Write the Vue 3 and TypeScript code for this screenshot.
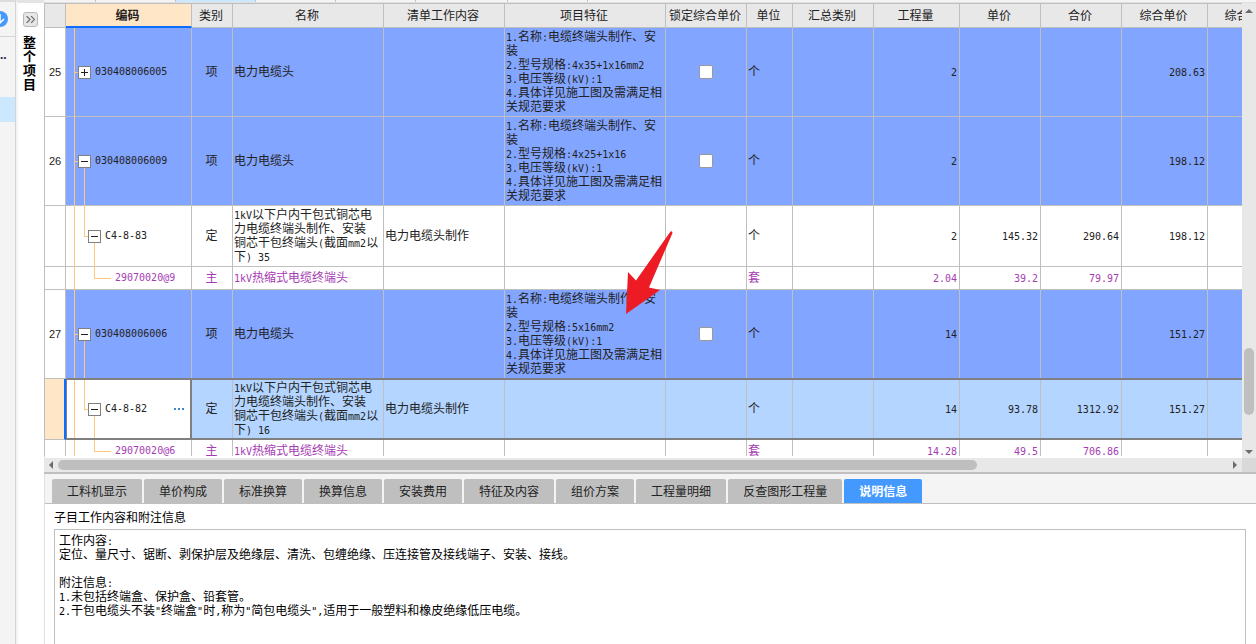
<script setup lang="ts">
import { ref } from 'vue'

interface Column { key: string; title: string; width: number; align: 'left' | 'center' | 'right' }
interface Row {
  no: string
  level: 1 | 2 | 3
  open: boolean
  code: string
  kind: string
  name: string[]
  work?: string
  feature?: string[]
  unit: string
  qty: string
  price?: string
  total?: string
  comp?: string
  tone: 'item' | 'plain' | 'material' | 'selected'
}

const columns: Column[] = [
  { key: 'code', title: '编码', width: 126, align: 'left' },
  { key: 'kind', title: '类别', width: 41, align: 'center' },
  { key: 'name', title: '名称', width: 151, align: 'left' },
  { key: 'work', title: '清单工作内容', width: 121, align: 'left' },
  { key: 'feature', title: '项目特征', width: 161, align: 'left' },
  { key: 'lock', title: '锁定综合单价', width: 81, align: 'center' },
  { key: 'unit', title: '单位', width: 46, align: 'left' },
  { key: 'sum', title: '汇总类别', width: 81, align: 'left' },
  { key: 'qty', title: '工程量', width: 86, align: 'right' },
  { key: 'price', title: '单价', width: 81, align: 'right' },
  { key: 'total', title: '合价', width: 81, align: 'right' },
  { key: 'comp', title: '综合单价', width: 86, align: 'right' },
  { key: 'compTotal', title: '综合合价', width: 84, align: 'right' },
]

const feature = (spec: string[]): string[] => [
  '1.名称:电缆终端头制作、安', '装', ...spec, '4.具体详见施工图及需满足相', '关规范要求',
]
const quota = (size: string): string[] => [
  '1kV以下户内干包式铜芯电', '力电缆终端头制作、安装', '铜芯干包终端头(截面mm2以', '下) ' + size,
]

const rows: Row[] = [
  { no: '25', level: 1, open: false, code: '030408006005', kind: '项', name: ['电力电缆头'], feature: feature(['2.型号规格:4x35+1x16mm2', '3.电压等级(kV):1']), unit: '个', qty: '2', comp: '208.63', tone: 'item' },
  { no: '26', level: 1, open: true, code: '030408006009', kind: '项', name: ['电力电缆头'], feature: feature(['2.型号规格:4x25+1x16', '3.电压等级(kV):1']), unit: '个', qty: '2', comp: '198.12', tone: 'item' },
  { no: '', level: 2, open: true, code: 'C4-8-83', kind: '定', name: quota('35'), work: '电力电缆头制作', unit: '个', qty: '2', price: '145.32', total: '290.64', comp: '198.12', tone: 'plain' },
  { no: '', level: 3, open: false, code: '29070020@9', kind: '主', name: ['1kV热缩式电缆终端头'], unit: '套', qty: '2.04', price: '39.2', total: '79.97', tone: 'material' },
  { no: '27', level: 1, open: true, code: '030408006006', kind: '项', name: ['电力电缆头'], feature: feature(['2.型号规格:5x16mm2', '3.电压等级(kV):1']), unit: '个', qty: '14', comp: '151.27', tone: 'item' },
  { no: '', level: 2, open: true, code: 'C4-8-82', kind: '定', name: quota('16'), work: '电力电缆头制作', unit: '个', qty: '14', price: '93.78', total: '1312.92', comp: '151.27', tone: 'selected' },
  { no: '', level: 3, open: false, code: '29070020@6', kind: '主', name: ['1kV热缩式电缆终端头'], unit: '套', qty: '14.28', price: '49.5', total: '706.86', tone: 'material' },
]

const tabs = ['工料机显示', '单价构成', '标准换算', '换算信息', '安装费用', '特征及内容', '组价方案', '工程量明细', '反查图形工程量', '说明信息']
const activeTab = ref('说明信息')

const notes = [
  '工作内容:',
  '定位、量尺寸、锯断、剥保护层及绝缘层、清洗、包缠绝缘、压连接管及接线端子、安装、接线。',
  '',
  '附注信息:',
  '1.未包括终端盒、保护盒、铅套管。',
  '2.干包电缆头不装"终端盒"时,称为"简包电缆头",适用于一般塑料和橡皮绝缘低压电缆。',
]

const cellLines = (row: Row, key: string): string[] => {
  const value = (row as unknown as Record<string, string | string[] | undefined>)[key]
  if (value === undefined) return []
  return Array.isArray(value) ? value : [value]
}

// Splits a line into half-width and full-width runs so that each gets its own face.
const runs = (line: string) =>
  (line.match(/[\x20-\x7e]+|[^\x20-\x7e]+/g) ?? []).map(text => ({ text, half: /^[\x20-\x7e]/.test(text) }))
</script>

<template>
  <div class="app">
    <aside class="rail">
      <div class="rail-head">
        <svg width="16" height="16" viewBox="0 0 16 16" aria-hidden="true">
          <circle cx="8" cy="8" r="8" fill="#4499fb" />
          <path d="M8 3v8M4 8l4 4 4-4" fill="none" stroke="#fff" stroke-width="1.5" />
        </svg>
      </div>
      <div class="rail-dots">..</div>
      <div class="rail-active"></div>
    </aside>
    <aside class="side">
      <button class="expand" type="button" aria-label="展开">
        <svg width="9" height="7" viewBox="0 0 9 7" aria-hidden="true">
          <path d="M0.5 0l3.500 3.500-3.500 3.500M5 0l3.500 3.500-3.500 3.500" fill="none" stroke="#707070" stroke-width="1.200" />
        </svg>
      </button>
      <div class="side-title">整个项目</div>
    </aside>

    <main class="workspace">
      <div class="strip"><i class="s1"></i><i class="s2"></i><i class="s3 on"></i><i class="s2"></i><i class="s2"></i><i class="s4"></i><i class="s2"></i></div>
      <section class="sheet">
        <div class="view">
          <table>
            <colgroup>
              <col class="col-no" />
              <col v-for="c in columns" :key="c.key" :style="{ width: c.width + 'px' }" />
            </colgroup>
            <thead>
              <tr>
                <th></th>
                <th v-for="c in columns" :key="c.key" :class="{ current: c.key === 'code' }">{{ c.title }}</th>
              </tr>
            </thead>
            <tbody>
              <tr v-for="row in rows" :key="row.code" :class="[row.tone, 'lv' + row.level]">
                <td class="no">{{ row.no }}</td>
                <td v-for="c in columns" :key="c.key" :class="[c.key, c.align]">
                  <template v-if="c.key === 'code'">
                    <i class="trunk"></i><i class="stem"></i><i class="branch"></i><i v-if="row.open" class="drop"></i>
                    <div class="node">
                      <button v-if="row.level < 3" class="toggle" type="button" :aria-label="row.open ? '折叠' : '展开'">
                        <svg width="11" height="11" viewBox="0 0 11 11" aria-hidden="true">
                          <path d="M2 5.500h7" stroke="#222" />
                          <path v-if="!row.open" d="M5.500 2v7" stroke="#222" />
                        </svg>
                      </button>
                      <span class="half">{{ row.code }}</span>
                      <button v-if="row.tone === 'selected'" class="more" type="button" aria-label="更多">
                        <svg width="11" height="3" viewBox="0 0 11 3" aria-hidden="true">
                          <path d="M0 0h2v2h-2zM4 0h2v2h-2zM8 0h2v2h-2z" fill="#3f88c8" />
                        </svg>
                      </button>
                    </div>
                  </template>
                  <input v-else-if="c.key === 'lock' && row.level === 1" class="tick" type="checkbox" :aria-label="'锁定综合单价 ' + row.code" />
                  <template v-else>
                    <div v-for="(line, i) in cellLines(row, c.key)" :key="i" class="line">
                      <span v-for="(r, j) in runs(line)" :key="j" :class="{ half: r.half }">{{ r.text }}</span>
                    </div>
                  </template>
                </td>
              </tr>
            </tbody>
          </table>
        </div>
        <div class="vbar">
          <svg width="8" height="4" viewBox="0 0 8 4" aria-hidden="true"><path d="M4 0l4 4h-8z" fill="#6b6b73" /></svg>
          <span class="vgap"></span><span class="vthumb"></span><span class="vrest"></span>
          <svg width="8" height="4" viewBox="0 0 8 4" aria-hidden="true"><path d="M0 0h8l-4 4z" fill="#6b6b73" /></svg>
        </div>
        <div class="hbar">
          <svg width="4" height="8" viewBox="0 0 4 8" aria-hidden="true"><path d="M4 0v8l-4-4z" fill="#6b6b73" /></svg>
          <span class="hthumb"></span><span class="hrest"></span>
          <svg width="4" height="8" viewBox="0 0 4 8" aria-hidden="true"><path d="M0 0l4 4-4 4z" fill="#6b6b73" /></svg>
        </div>
        <div class="corner"></div>
        <svg class="pointer" width="48" height="84" viewBox="0 0 48 84" aria-hidden="true">
          <path d="M0 83L2 41L10 49.500L44.500 0.500Q46.500 -0.500 46.500 2L23 56.500L34 59Z" fill="#ed1c24" />
        </svg>
      </section>

      <section class="detail">
        <nav class="tabs" role="tablist">
          <button v-for="t in tabs" :key="t" type="button" role="tab" :aria-selected="t === activeTab" :class="{ active: t === activeTab }" @click="activeTab = t">{{ t }}</button>
        </nav>
        <h2>子目工作内容和附注信息</h2>
        <div class="notes">
          <div v-for="(line, i) in notes" :key="i" class="line">
            <span v-for="(r, j) in runs(line)" :key="j" :class="{ half: r.half }">{{ r.text }}</span>
          </div>
        </div>
      </section>
    </main>
  </div>
</template>

<style>
body { margin: 0; overflow: hidden; }
</style>

<style scoped>
* { box-sizing: border-box; }
button { font: inherit; padding: 0; margin: 0; border: 0; background: none; }
svg { display: block; flex: none; }
.app {
  display: flex;
  height: 100vh;
  background: #fff;
  color: #222;
  font: 12px/14px "Noto Sans CJK SC", sans-serif;
}
.rail { flex: none; width: 16px; background: #f4f4f4; border-right: 1px solid #d4d4d4; border-top: 2px solid #dcdcdc; overflow: hidden; }
.rail-head { height: 35px; padding-top: 9px; border-bottom: 1px solid #d4d4d4; }
.rail-head svg { margin-left: -8px; }
.rail-dots { height: 60px; padding-top: 11px; font: bold 12px/14px "Liberation Sans", sans-serif; color: #224; }
.rail-active { height: 25px; background: #cce8ff; }
.side { flex: none; width: 28px; border-left: 2px solid #f4f4f4; border-top: 3px solid #e4e4e4; padding: 9px 5px; }
.expand { display: flex; align-items: center; justify-content: center; width: 15px; height: 15px; background: #e6e6e6; border: 1px solid #b8b8b8; border-radius: 3px; }
.side-title { width: 13px; margin-top: 8px; font-weight: bold; font-size: 13px; line-height: 14px; word-break: break-all; color: #000; }
.workspace { flex: 1; min-width: 0; display: flex; flex-direction: column; }
.strip { flex: none; display: flex; height: 3px; background: #f4f4f4; border-bottom: 1px solid #e0e0e0; }
.strip i { border-right: 1px solid #c4c4c4; }
.s1 { width: 52px; }
.s2, .s3 { width: 80px; }
.s4 { width: 92px; }
.on { background: #cce8ff; }

.sheet { position: relative; flex: 1; min-height: 0; display: grid; grid-template: minmax(0, 1fr) 14px / minmax(0, 1fr) 14px; border-bottom: 2px solid #bfbfbf; }
.view { overflow: hidden; border-top: 1px solid #bfbfbf; border-left: 1px solid #bfbfbf; border-bottom: 2px solid #fff; }
table { table-layout: fixed; width: 1233px; border-collapse: separate; border-spacing: 0; }
.col-no { width: 21px; }
th { height: 24px; padding: 0 2px 2px 0; font-weight: normal; text-align: center; background: #e8e8e8; border-right: 1px solid #bfbfbf; border-bottom: 1px solid #bfbfbf; white-space: nowrap; }
th.current { padding-bottom: 0; font-weight: bold; background: #ffe6c7; border-bottom: 2px solid #0d6efd; }
td { position: relative; padding: 0 2px 2px 1px; vertical-align: middle; border-right: 1px solid #bfbfbf; border-bottom: 1px solid #bfbfbf; }
td.code, td.lock { padding-bottom: 0; }
.lv1 td { height: 89px; }
.lv2 td { height: 61px; }
.lv3 td { height: 23px; }
.item td { background: #82a5ff; }
.selected td { background: #b3d5ff; }
.material td { color: #a63cb4; }
tr td.no { padding: 0; background: #fff; text-align: center; font: 11px/14px "Liberation Sans", sans-serif; }
.selected td.no { background: #ffe6c7; border-right: 2px solid #0d6efd; }
.selected td.code { background: #fff; }
.selected td:not(.no)::after { content: ""; position: absolute; inset: -1px -1px -1px 0; border: solid #808080; border-width: 2px 0; pointer-events: none; }
.selected td.code::after { border-width: 2px 2px 2px 1px; }
.center { text-align: center; }
.right { text-align: right; }
.line { height: 14px; line-height: 14px; white-space: pre; }
.half { font-family: "DejaVu Sans Mono", monospace; font-size: 10px; }
.trunk, .stem, .branch, .drop { position: absolute; background: #ffc87d; }
.trunk { left: 8px; top: 0; bottom: -1px; width: 1px; }
.lv1 .stem { display: none; }
.lv2 .stem { left: 18px; top: 0; height: 50%; width: 1px; }
.lv3 .stem { left: 28px; top: 0; height: 50%; width: 1px; }
.branch { top: 50%; height: 1px; }
.lv1 .branch { left: 8px; width: 4px; }
.lv2 .branch { left: 18px; width: 4px; }
.lv3 .branch { left: 28px; width: 17px; }
.drop { top: 50%; bottom: -1px; width: 1px; }
.lv1 .drop { left: 18px; }
.lv2 .drop { left: 28px; }
.node { position: relative; display: flex; align-items: center; gap: 4px; }
.lv1 .node { padding-left: 11px; }
.lv2 .node { padding-left: 21px; }
.lv3 .node { padding-left: 48px; }
.toggle { flex: none; width: 13px; height: 13px; border: 1px solid #808080; background: #fff; }
.more { margin-left: auto; padding: 4px; }
.tick { appearance: none; display: block; width: 14px; height: 14px; margin: 0 auto; background: #fff; border: 1px solid #999; border-radius: 2px; }

.vbar { display: flex; flex-direction: column; align-items: center; background: #e8e8e8; padding: 6px 0 4px; }
.vgap { flex: 335; }
.vthumb { flex: 67; width: 10px; border-radius: 5px; background: #bfbfbf; }
.vrest { flex: 35; }
.hbar { display: flex; align-items: center; padding: 0 5px; background: #e8e8e8; }
.hthumb { flex: 919; height: 10px; margin-left: 5px; border-radius: 5px; background: #bfbfbf; }
.hrest { flex: 256; }
.corner { background: #d9d9d9; }
.pointer { position: absolute; left: 582px; top: 228px; }

.detail { flex: none; height: 170px; display: flex; flex-direction: column; border-left: 1px solid #e0e0e0; }
.tabs { flex: none; display: flex; gap: 2px; height: 30px; padding: 5px 7px 0; background: #f4f4f4; border-bottom: 1px solid #bfbfbf; }
.tabs button { padding: 0 15px; background: #bfbfbf; border-radius: 2px 2px 0 0; color: #222; white-space: nowrap; }
.tabs button.active { background: #4499ff; color: #fff; font-weight: bold; }
h2 { flex: none; margin: 6px 9px 5px; font-size: 12px; line-height: 14px; font-weight: normal; color: #000; }
.notes { flex: 1; margin: 0 10px 0 9px; padding: 3px 4px; border: 1px solid #bfbfbf; border-bottom: 0; color: #000; overflow: hidden; }
</style>
